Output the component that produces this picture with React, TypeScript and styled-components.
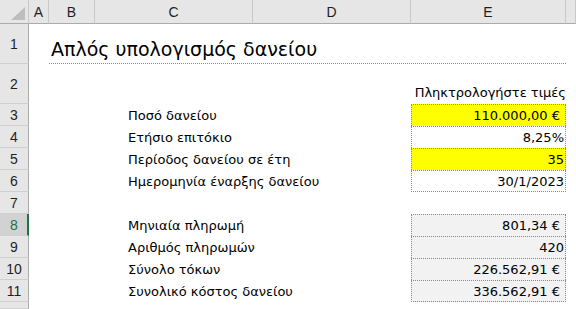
import React from "react";
import styled, {createGlobalStyle} from "styled-components";

const HEADER_BG = "#e6e6e6";
const HEADER_LINE = "#ababab";
const HEADER_SEP = "#c8c8c8";
const CELL_DOTS = "#8a8a8a";
const SELECT_GREEN = "#217346";
const HEAD_FONT = `"Liberation Sans", Arial, sans-serif`;
const CELL_FONT = `"DejaVu Sans", Verdana, sans-serif`;

const GlobalStyle = createGlobalStyle`
	html, body {
		margin: 0;
		padding: 0;
		background: #ffffff;
		overflow: hidden;
	}
	body {
		font-family: ${CELL_FONT};
		color: #000000;
	}
`

const Sheet = styled.div`
	display: grid;
	grid-template-columns: 29px 20px 46px 158px 158px 155px 1fr;
	grid-template-rows: 24px 40px 40px repeat(9, 22px) 1fr;
	width: 576px;
	height: 309px;
	overflow: hidden;
	font-size: 13px;
`

const Corner = styled.div`
	background: ${HEADER_BG};
	border-right: 1px solid ${HEADER_SEP};
	border-bottom: 1px solid ${HEADER_LINE};
	display: flex;
	align-items: flex-end;
	justify-content: flex-end;
	padding: 0 3px 3px 0;
	box-sizing: border-box;
`

const ColHeader = styled.div`
	background: ${HEADER_BG};
	border-right: 1px solid ${HEADER_SEP};
	border-bottom: 1px solid ${HEADER_LINE};
	box-sizing: border-box;
	display: flex;
	align-items: center;
	justify-content: center;
	font-family: ${HEAD_FONT};
	font-size: 14px;
	color: #1f1f1f;
	padding-top: 1px;
`

const RowHeader = styled.div<{$active?: boolean}>`
	background: ${p => p.$active ? "#d2d2d2" : HEADER_BG};
	border-right: ${p => p.$active ? `2px solid ${SELECT_GREEN}` : `1px solid ${HEADER_LINE}`};
	border-bottom: 1px solid #d0d0d0;
	box-sizing: border-box;
	display: flex;
	align-items: center;
	justify-content: center;
	font-family: ${HEAD_FONT};
	font-size: 14px;
	color: ${p => p.$active ? SELECT_GREEN : "#1f1f1f"};
	padding-left: ${p => p.$active ? "1px" : "0"};
`

const Cell = styled.div`
	min-width: 0;
`

const TitleCell = styled.div`
	grid-column: span 4;
	border-bottom: 1px dotted ${CELL_DOTS};
	box-sizing: border-box;
	display: flex;
	align-items: flex-end;
	padding: 0 0 3px 2px;
	font-size: 19px;
	white-space: nowrap;
`

const HintCell = styled.div`
	display: flex;
	align-items: flex-end;
	justify-content: flex-end;
	padding-bottom: 4px;
	white-space: nowrap;
`

const LabelCell = styled.div`
	grid-column: span 2;
	display: flex;
	align-items: center;
	padding-left: 33px;
	white-space: nowrap;
`

const ValueCell = styled.div<{$fill: string; $last?: boolean; $euro?: boolean}>`
	background: ${p => p.$fill};
	border: 1px dotted ${CELL_DOTS};
	border-bottom: ${p => p.$last ? `1px dotted ${CELL_DOTS}` : "none"};
	box-sizing: border-box;
	display: flex;
	align-items: center;
	justify-content: flex-end;
	padding-right: ${p => p.$euro ? "5px" : "1px"};
	white-space: nowrap;
`

const CornerMark = () => (
	<svg width="14" height="13" viewBox="0 0 14 13">
		<polygon points="14,0 14,13 0,13" fill="#bdbdbd" />
	</svg>
)

interface Entry {
	row: number;
	label: string;
	value: string;
	fill: string;
	euro?: boolean;
}

const inputs: Entry[] = [
	{row: 3, label: "Ποσό δανείου", value: "110.000,00 €", fill: "#ffff00", euro: true},
	{row: 4, label: "Ετήσιο επιτόκιο", value: "8,25%", fill: "#ffffff"},
	{row: 5, label: "Περίοδος δανείου σε έτη", value: "35", fill: "#ffff00"},
	{row: 6, label: "Ημερομηνία έναρξης δανείου", value: "30/1/2023", fill: "#ffffff"},
]

const results: Entry[] = [
	{row: 8, label: "Μηνιαία πληρωμή", value: "801,34 €", fill: "#f2f2f2", euro: true},
	{row: 9, label: "Αριθμός πληρωμών", value: "420", fill: "#f2f2f2"},
	{row: 10, label: "Σύνολο τόκων", value: "226.562,91 €", fill: "#f2f2f2", euro: true},
	{row: 11, label: "Συνολικό κόστος δανείου", value: "336.562,91 €", fill: "#f2f2f2", euro: true},
]

const EntryRows: React.FunctionComponent<{items: Entry[]}> = ({items}) => <>
	{items.map((item, i) => <React.Fragment key={item.row}>
		<RowHeader $active={item.row === 8}>{item.row}</RowHeader>
		<Cell />
		<Cell />
		<LabelCell>{item.label}</LabelCell>
		<ValueCell $fill={item.fill} $euro={item.euro} $last={i === items.length - 1}>
			{item.value}
		</ValueCell>
		<Cell />
	</React.Fragment>)}
</>

export default function App() {
	return <>
		<GlobalStyle />
		<Sheet>
			<Corner><CornerMark /></Corner>
			{["A", "B", "C", "D", "E"].map(c => <ColHeader key={c}>{c}</ColHeader>)}
			<ColHeader />

			<RowHeader>1</RowHeader>
			<Cell />
			<TitleCell>Απλός υπολογισμός δανείου</TitleCell>
			<Cell />

			<RowHeader>2</RowHeader>
			<Cell />
			<Cell />
			<Cell />
			<Cell />
			<HintCell>Πληκτρολογήστε τιμές</HintCell>
			<Cell />

			<EntryRows items={inputs} />

			<RowHeader>7</RowHeader>
			<Cell />
			<Cell />
			<Cell />
			<Cell />
			<Cell />
			<Cell />

			<EntryRows items={results} />

			<RowHeader />
		</Sheet>
	</>
}
